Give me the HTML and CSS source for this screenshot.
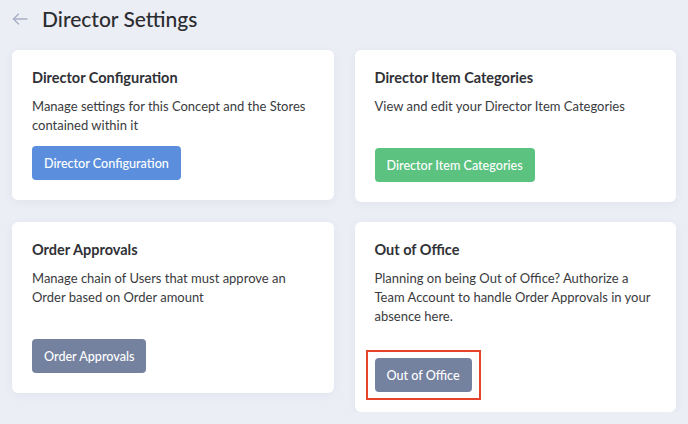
FILE: index.html
```html
<!DOCTYPE html>
<html lang="en">
  <head>
    <meta charset="UTF-8" />
    <meta name="viewport" content="width=device-width, initial-scale=1.0" />
    <title>Director Settings</title>
    <link rel="stylesheet" href="styles.css">
  </head>
  <body>
    <header class="page-header">
      <a class="back-link" href="#" aria-label="Back">
        <svg width="16" height="12" viewBox="0 0 16 12" fill="none" stroke="currentColor" stroke-width="1.3" stroke-linecap="round" stroke-linejoin="round">
          <path d="M15 6H1.5" />
          <path d="M6.5 1L1.5 6l5 5" />
        </svg>
      </a>
      <h1>Director Settings</h1>
    </header>

    <div class="settings-grid">
      <div class="card card-tight">
        <h2>Director Configuration</h2>
        <p>Manage settings for this Concept and the Stores contained within it</p>
        <button class="btn btn-blue">Director Configuration</button>
      </div>

      <div class="card">
        <h2>Director Item Categories</h2>
        <p>View and edit your Director Item Categories</p>
        <button class="btn btn-green">Director Item Categories</button>
      </div>

      <div class="card">
        <h2>Order Approvals</h2>
        <p>Manage chain of Users that must approve an Order based on Order amount</p>
        <button class="btn btn-slate">Order Approvals</button>
      </div>

      <div class="card">
        <h2>Out of Office</h2>
        <p>Planning on being Out of Office? Authorize a Team Account to handle Order Approvals in your absence here.</p>
        <!-- highlighted for the help article -->
        <div class="highlight">
          <button class="btn btn-slate">Out of Office</button>
        </div>
      </div>
    </div>
  </body>
</html>
```

FILE: styles.css
```css
/* Global Styles */
* {
  margin: 0;
  padding: 0;
  box-sizing: border-box;
}

body {
  font-family: Lato, "Open Sans", Arial, sans-serif;
  background: #ebeef5;
  color: #2e2f33;
  padding: 0 12px;
}

/* Header */
.page-header {
  display: flex;
  align-items: center;
  height: 37px;
}

.back-link {
  display: flex;
  color: #a8afc3;
  margin-right: 14px;
}

.page-header h1 {
  font-size: 21px;
  font-weight: 500;
  color: #2b2c30;
}

/* Cards */
.settings-grid {
  display: grid;
  grid-template-columns: 1fr 1fr;
  column-gap: 21px;
  row-gap: 20px;
  align-items: start;
  margin-top: 13px;
}

.card {
  background: #ffffff;
  border-radius: 6px;
  box-shadow: 0 2px 10px rgba(60, 70, 110, 0.06);
  padding: 18px 20px 20px;
}

.card h2 {
  font-size: 14.5px;
  font-weight: 700;
  line-height: 20px;
  color: #303136;
  margin-bottom: 9px;
}

.card p {
  font-size: 13px;
  line-height: 19px;
  color: #3a3b40;
  margin-bottom: 32px;
}

.card-tight p {
  margin-bottom: 11px;
}

/* Buttons */
.btn {
  display: inline-block;
  height: 34px;
  padding: 0 12px;
  border: none;
  border-radius: 4px;
  font-family: inherit;
  font-size: 12.6px;
  font-weight: 500;
  color: #ffffff;
  cursor: pointer;
}

.btn-blue {
  background: #5b8fdd;
}

.btn-green {
  background: #5bc27f;
}

.btn-slate {
  background: #7482a0;
}

.highlight {
  display: inline-block;
  border: 2px solid #e5432b;
  padding: 6px 7px;
  margin: -8px 0 -8px -9px;
}
```
